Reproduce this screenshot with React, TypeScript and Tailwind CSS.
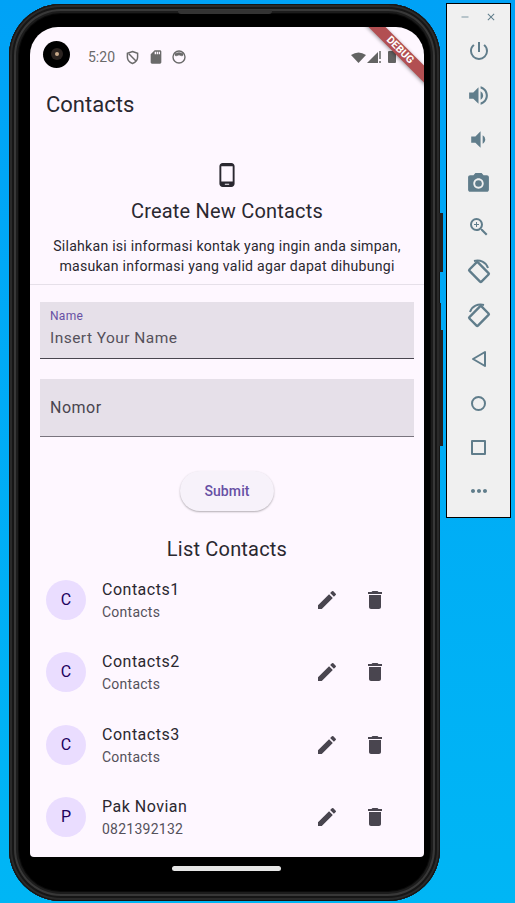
import { MdDelete, MdEdit, MdPhoneAndroid, MdPowerSettingsNew, MdVolumeUp, MdVolumeDown, MdPhotoCamera, MdZoomIn, MdSdCard, MdMoreHoriz, MdClose, MdRemove } from 'react-icons/md';

const contacts = [
  { letter: 'C', name: 'Contacts1', sub: 'Contacts' },
  { letter: 'C', name: 'Contacts2', sub: 'Contacts' },
  { letter: 'C', name: 'Contacts3', sub: 'Contacts' },
  { letter: 'P', name: 'Pak Novian', sub: '0821392132' },
];

function RotateIcon({ flip }: { flip?: boolean }) {
  return (
    <svg width="26" height="26" viewBox="0 0 26 26" fill="none" stroke="#607d8b" className={flip ? '-scale-x-100' : ''}>
      <rect x="7" y="5.5" width="12" height="17" rx="1" strokeWidth="2.4" transform="rotate(45 13 14)" />
      <path d="M4 10 C6 4 12 1.5 18 3" strokeWidth="2" />
    </svg>
  );
}

function ToolIcon({ children }: { children: React.ReactNode }) {
  return <div className="h-[44px] flex items-center justify-center text-[#607d8b]">{children}</div>;
}

function ContactRow({ letter, name, sub }: { letter: string; name: string; sub: string }) {
  return (
    <div className="h-[72.3px] flex items-center pl-4">
      <div className="w-[40px] h-[40px] rounded-full bg-[#eaddff] text-[#21005d] flex items-center justify-center text-[16px]">{letter}</div>
      <div className="ml-4 w-[201px]">
        <div className="text-[16px] leading-[24px] tracking-[0.5px] text-[#2a2830]">{name}</div>
        <div className="text-[14px] leading-[20px] tracking-[0.25px] text-[#55515b]">{sub}</div>
      </div>
      <div className="w-[48px] flex justify-center text-[#49454f]"><MdEdit size={24} /></div>
      <div className="w-[48px] flex justify-center text-[#49454f]"><MdDelete size={24} /></div>
    </div>
  );
}

export default function App() {
  return (
    <div className="w-[515px] h-[903px] overflow-hidden flex items-start bg-gradient-to-b from-[#00a2f6] to-[#00b6f5] font-['Roboto',sans-serif]">
      {/* phone */}
      <div className="relative ml-[9px] mt-[4px] w-[431px] h-[897px] rounded-[52px] bg-black pt-[23px] pl-[21px] shadow-[inset_0_0_0_1px_#161616,inset_0_0_0_3px_#2a2a2a,inset_0_0_0_5px_#161616,inset_0_0_0_7px_#383838,inset_0_0_0_9px_#1c1c1c,inset_0_0_0_10px_#0a0a0a]">
        <div className="absolute left-[169px] top-[6px] w-[94px] h-[4px] rounded-b-[3px] bg-[#333]" />
        <div className="absolute -right-[3px] top-[209px] w-[4px] h-[59px] bg-[#222]" />
        <div className="absolute -right-[1px] top-[299px] w-[2px] h-[27px] bg-[#222]" />
        <div className="absolute -right-[3px] top-[326px] w-[4px] h-[116px] bg-[#222]" />

        <div className="relative w-[394px] h-[830px] bg-[#fef7ff] overflow-hidden rounded-t-[28px] rounded-b-[4px] flex flex-col">
          {/* status bar */}
          <div className="h-[60px] flex items-center shrink-0 pl-[13px]">
            <div className="-mt-[6px] w-[27px] h-[27px] rounded-full bg-black flex items-center justify-center">
              <div className="w-[12px] h-[12px] rounded-full bg-[#2b2320] flex items-center justify-center">
                <div className="w-[4px] h-[4px] rounded-full bg-[#c9a98a]" />
              </div>
            </div>
            <span className="ml-[18px] text-[14px] text-[#6a6a6a]">5:20</span>
            <svg className="ml-[11px]" width="13" height="15" viewBox="0 0 14 15" fill="none" stroke="#6a6a6a" strokeWidth="1.6">
              <path d="M7 1 L12.5 3 V7 C12.5 10.5 10 13 7 14 C4 13 1.5 10.5 1.5 7 V3 Z" />
              <path d="M3 3.5 L11 11.5" />
            </svg>
            <MdSdCard className="ml-[9px] text-[#6a6a6a]" size={16} />
            <svg className="ml-[8px]" width="14" height="14" viewBox="0 0 14 14" fill="none" stroke="#6a6a6a" strokeWidth="1.4">
              <circle cx="7" cy="7" r="6" />
              <path d="M3 5.5 C5 6.5 5.5 5 7 5 C8.5 5 9 6.5 11 5.5 V3.5 L7 2.5 L3 3.5 Z" fill="#6a6a6a" strokeWidth="0.5" />
            </svg>
            <div className="ml-auto flex items-end pr-[28px]">
              <svg width="15" height="11" viewBox="0 0 15 11" fill="#636363"><path d="M0 3 Q7.5 -2 15 3 L7.5 11 Z" /></svg>
              <svg className="ml-[1px]" width="11" height="11" viewBox="0 0 11 11" fill="#636363"><path d="M11 0 V11 H0 Z" /></svg>
              <div className="ml-[1px] w-[2px] h-[12px] flex flex-col justify-between">
                <div className="h-[8px] bg-[#8a8a8a]" />
                <div className="h-[2px] bg-[#8a8a8a]" />
              </div>
              <div className="ml-[7px] w-[8px] h-[12px] rounded-[1px] bg-[#636363]" />
            </div>
          </div>

          {/* app bar */}
          <div className="h-[35px] shrink-0 pl-[16px] flex items-center text-[22px] text-[#2a2830]">Contacts</div>

          {/* header */}
          <div className="pt-[40px] flex flex-col items-center border-b border-[#e6e0e9] h-[163px] shrink-0">
            <MdPhoneAndroid size={26} className="text-[#2a2830]" />
            <div className="mt-[9px] text-[20px] leading-[28px] tracking-[0.2px] text-[#2a2830]">Create New Contacts</div>
            <div className="mt-[11px] text-[14.1px] leading-[20px] tracking-[0.25px] text-[#2a2830] text-center">
              Silahkan isi informasi kontak yang ingin anda simpan,<br />
              masukan informasi yang valid agar dapat dihubungi
            </div>
          </div>

          {/* form */}
          <div className="px-[10px] pt-[17px] shrink-0">
            <div className="h-[57px] bg-[#e6e0e9] border-b-[1.5px] border-[#49454f] px-[10px] pt-[7px]">
              <div className="text-[12px] leading-[14px] tracking-[0.3px] text-[#6750a4]">Name</div>
              <div className="mt-[3px] text-[15.5px] leading-[24px] tracking-[0.45px] text-[#55515b]">Insert Your Name</div>
            </div>
            <div className="mt-[20px] h-[58px] bg-[#e6e0e9] border-b-[1.5px] border-[#79747e] px-[10px] flex items-center">
              <div className="text-[16px] tracking-[0.5px] text-[#49454f]">Nomor</div>
            </div>
          </div>

          <div className="mt-[34px] flex justify-center shrink-0">
            <div className="w-[94px] h-[40px] rounded-full bg-[#f7f2fa] text-[#6750a4] text-[14px] font-medium tracking-[0.1px] flex items-center justify-center shadow-[0_1px_2px_rgba(0,0,0,0.3)]">Submit</div>
          </div>

          <div className="mt-[24px] h-[28px] shrink-0 text-center text-[20px] leading-[28px] tracking-[0.2px] text-[#2a2830]">List Contacts</div>

          <div className="mt-[1px]">
            {contacts.map((c) => (
              <ContactRow key={c.name} {...c} />
            ))}
          </div>

          {/* debug banner */}
          <div className="absolute -right-[41px] top-[17px] w-[130px] h-[12px] rotate-45 bg-[#b24f52] text-white text-[10.5px] leading-none font-bold flex items-center justify-center shadow-[0_1px_4px_rgba(0,0,0,0.4)]">DEBUG</div>
        </div>

        <div className="mt-[9px] ml-[142px] w-[109px] h-[5px] rounded-full bg-[#e6e6e6]" />
      </div>

      {/* emulator toolbar */}
      <div className="ml-[6px] mt-[3px] w-[65px] h-[515px] bg-[#f0f0f0] border border-black flex flex-col items-center">
        <div className="w-full h-[25px] flex items-center justify-between pl-[12px] pr-[13px] pt-[1px] text-[#7f98a5]">
          <MdRemove size={12} />
          <MdClose size={12} className="text-[#607d8b]" />
        </div>
        <ToolIcon><MdPowerSettingsNew size={24} /></ToolIcon>
        <ToolIcon><MdVolumeUp size={25} /></ToolIcon>
        <ToolIcon><MdVolumeDown size={25} /></ToolIcon>
        <ToolIcon><MdPhotoCamera size={25} /></ToolIcon>
        <ToolIcon><MdZoomIn size={24} /></ToolIcon>
        <ToolIcon><RotateIcon flip /></ToolIcon>
        <ToolIcon><RotateIcon /></ToolIcon>
        <ToolIcon>
          <svg width="16" height="18" viewBox="0 0 16 18" fill="none" stroke="#607d8b" strokeWidth="2"><path d="M14 2 V16 L2 9 Z" strokeLinejoin="round" /></svg>
        </ToolIcon>
        <ToolIcon>
          <div className="w-[15px] h-[15px] rounded-full border-2 border-[#607d8b]" />
        </ToolIcon>
        <ToolIcon>
          <div className="w-[15px] h-[15px] rounded-[1px] border-2 border-[#607d8b]" />
        </ToolIcon>
        <ToolIcon><MdMoreHoriz size={24} /></ToolIcon>
      </div>
    </div>
  );
}
